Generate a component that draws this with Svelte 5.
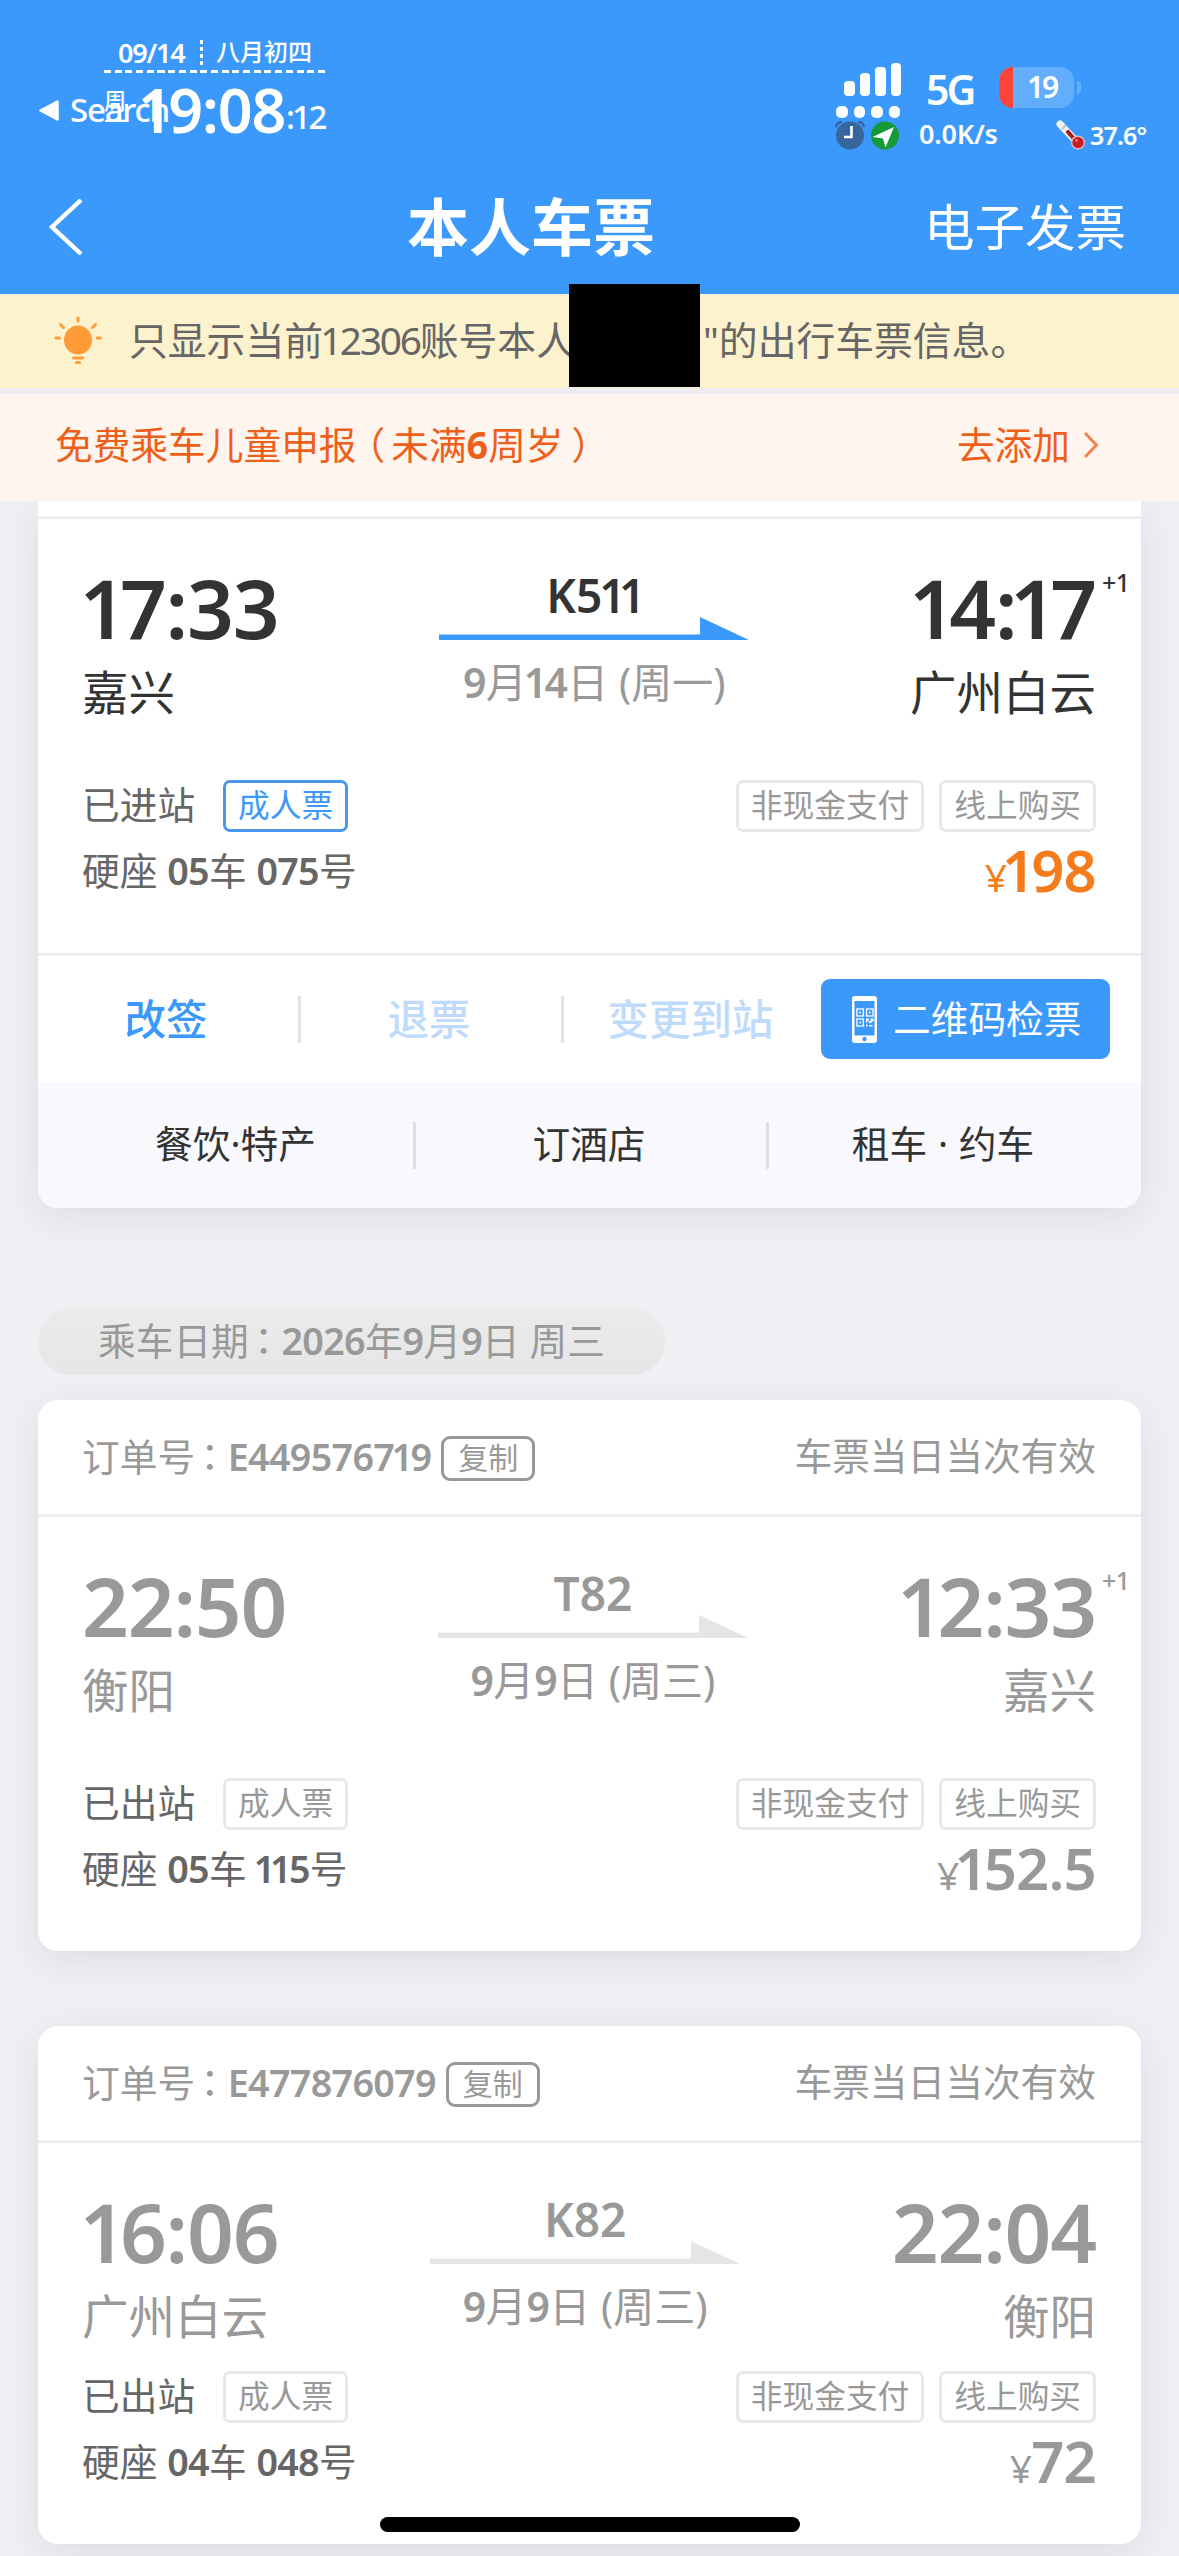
<script lang="ts">
	interface Ticket {
		order?: string;
		depart: string;
		arrive: string;
		nextDay?: boolean;
		from: string;
		to: string;
		train: string;
		date: string;
		status: string;
		seat: string;
		price: string;
		active?: boolean;
		compact?: boolean;
	}

	const current: Ticket = {
		depart: '17:33',
		arrive: '14:17',
		nextDay: true,
		from: '嘉兴',
		to: '广州白云',
		train: 'K511',
		date: '9月14日 (周一)',
		status: '已进站',
		seat: '硬座 05车 075号',
		price: '198',
		active: true
	};

	const history: Ticket[] = [
		{
			order: 'E449576719',
			depart: '22:50',
			arrive: '12:33',
			nextDay: true,
			from: '衡阳',
			to: '嘉兴',
			train: 'T82',
			date: '9月9日 (周三)',
			status: '已出站',
			seat: '硬座 05车 115号',
			price: '152.5'
		},
		{
			order: 'E477876079',
			depart: '16:06',
			arrive: '22:04',
			from: '广州白云',
			to: '衡阳',
			train: 'K82',
			date: '9月9日 (周三)',
			status: '已出站',
			seat: '硬座 04车 048号',
			price: '72',
			compact: true
		}
	];

	const bars = [15, 23, 29, 33];
</script>

<!-- the digit 1 is set tighter than the other digits -->
{#snippet digits(text: string)}{#each text.split(/(1)/) as part}{#if part === '1'}<span class="one">1</span>{:else}{part}{/if}{/each}{/snippet}

<!-- numbers stand out from the characters round them -->
{#snippet mixed(text: string)}{#each text.split(/(\d+)/) as part}{#if /\d/.test(part)}<b class="num">{@render digits(part)}</b>{:else}{part}{/if}{/each}{/snippet}

{#snippet ticketBody(t: Ticket)}
	<div class="ticket" class:active={t.active} class:compact={t.compact}>
		<div class="trip">
			<div class="stop">
				<div class="time">{@render digits(t.depart)}</div>
				<div class="station">{t.from}</div>
			</div>
			<div class="route">
				<div class="train">{@render digits(t.train)}</div>
				<svg class="arrow" width="310" height="23" viewBox="0 0 310 23">
					<path d="M0 17.5H261V0L310 23H0z" fill="currentColor" />
				</svg>
				<div class="date">{@render mixed(t.date)}</div>
			</div>
			<div class="stop end">
				<div class="time">{@render digits(t.arrive)}{#if t.nextDay}<span class="next-day">+1</span>{/if}</div>
				<div class="station">{t.to}</div>
			</div>
		</div>
		<div class="row tags">
			<span class="status">{t.status}</span>
			<span class="tag kind">成人票</span>
			<span class="tag push">非现金支付</span>
			<span class="tag">线上购买</span>
		</div>
		<div class="row fare">
			<span class="seat">{@render mixed(t.seat)}</span>
			<span class="price"><small>¥</small>{@render digits(t.price)}</span>
		</div>
	</div>
{/snippet}

<div class="screen">
	<header>
		<div class="status-bar">
			<div class="clock">
				<div class="calendar">
					<span>09/14</span>
					<i class="dots"></i>
					<span>八月初四</span>
				</div>
				<div class="now">
					<span class="weekday"><b>周</b><b>一</b></span>
					<i class="dots tall"></i>
					<span class="hm">{@render digits('19:08')}</span>
					<span class="sec">{@render digits(':12')}</span>
				</div>
				<div class="return">
					<svg width="20" height="21" viewBox="0 0 20 21"><path d="M1.5 10.5 18.5 1.5v18z" fill="#fff" stroke="#fff" stroke-width="2.5" stroke-linejoin="round" /></svg>
					<span>Search</span>
				</div>
			</div>

			<div class="system">
				<div class="signal">
					<div class="bars">
						{#each bars as h}<i style="height: {h}px"></i>{/each}
					</div>
					<div class="pips"><i></i><i></i><i></i><i></i></div>
					<div class="badges">
						<svg width="30" height="29" viewBox="0 0 30 29">
							<path d="M1 6Q2 1 7 1M29 6Q28 1 23 1" fill="none" stroke="#36669b" stroke-width="2.5" />
							<ellipse cx="15" cy="14.5" rx="14" ry="14" fill="#36669b" />
							<path d="M16.5 5v11H9" fill="none" stroke="#fff" stroke-width="2.6" />
						</svg>
						<svg width="28" height="29" viewBox="0 0 28 29">
							<ellipse cx="14" cy="14.5" rx="14" ry="14" fill="#149b37" />
							<path d="M23 6 1.5 16 12 17.5 14.5 26.5z" fill="#fff" />
						</svg>
					</div>
				</div>
				<div class="network">
					<span class="cell">5G</span>
					<span class="speed">0.0K/s</span>
				</div>
				<div class="power">
					<div class="battery">
						<div class="level">{@render digits('19')}</div>
						<i class="nub"></i>
					</div>
					<div class="heat">
						<svg width="30" height="30" viewBox="0 0 30 30">
							<path d="M4 4 17 18" stroke="#f4f0ee" stroke-width="7" stroke-linecap="round" />
							<path d="M6 9l4-4M10 13l4-4" stroke="#9fb9d8" stroke-width="1.3" />
							<path d="M12 12 20 21" stroke="#a51d22" stroke-width="4" stroke-linecap="round" />
							<circle cx="22" cy="22.5" r="7" fill="#e3b9bd" />
							<circle cx="22" cy="22.5" r="5.6" fill="#cb1c24" />
							<circle cx="20.5" cy="20.5" r="1.6" fill="#ee6b6b" />
						</svg>
						<span>37.6°</span>
					</div>
				</div>
			</div>
		</div>
		<nav>
			<svg class="back" width="34" height="56" viewBox="0 0 34 56"><path d="M32 1 3 28 32 55" fill="none" stroke="#fff" stroke-width="4.4" /></svg>
			<h1>本人车票</h1>
			<span class="invoice">电子发票</span>
		</nav>
	</header>

	<div class="notice">
		<svg width="48" height="48" viewBox="0 0 48 48" fill="#ff9c38" stroke="#ff9c38" stroke-width="3" stroke-linecap="round">
			<path d="M24 2v3M6.5 8.5 9.5 11.5M41.5 8.5 38.5 11.5M2 22h3.5M43 22h3.5" />
			<ellipse cx="24" cy="24" rx="12.5" ry="13" />
			<path d="M19.5 42h9M22.5 46.5h3" />
		</svg>
		<p>只显示当前<span class="account">{@render digits('12306')}</span>账号本人</p>
		<i class="mask"></i>
		<p>"的出行车票信息。</p>
	</div>

	<div class="child">
		<span>免费乘车儿童申报<span class="open">（</span>未满<b>6</b>周岁<span class="close">）</span></span>
		<span class="add">
			去添加
			<svg width="16" height="28" viewBox="0 0 16 28"><path d="M2 2 13.5 14 2 26" fill="none" stroke="#f28250" stroke-width="3" /></svg>
		</span>
	</div>

	<main>
		<section class="card first">
			<div class="cut"></div>
			{@render ticketBody(current)}
			<div class="actions">
				<span class="action">改签</span>
				<span class="action off">退票</span>
				<span class="action off">变更到站</span>
				<span class="qr">
					<svg width="25" height="47" viewBox="0 0 25 47">
						<rect width="25" height="47" rx="3" fill="#fff" />
						<rect x="2.5" y="5" width="20" height="34.5" fill="#3c99fc" />
						<circle cx="12.5" cy="43" r="2.2" fill="#3c99fc" />
						<g fill="none" stroke="#fff" stroke-width="1.3">
							<rect x="4.9" y="13" width="6.5" height="7" />
							<rect x="14.5" y="13" width="6.5" height="7" />
							<rect x="4.9" y="23" width="6.5" height="7" />
						</g>
						<path d="M7.4 15.5h1.5v2H7.4zM17 15.5h1.5v2H17zM7.4 25.5h1.5v2H7.4zM14 22.5h3v2h-1.5v2H14zM18.5 22.5h3v3h-2v1.5h-2.5v-2h1.5zM14 28.5h1.5v2H14zM17 29h3.5v1.5H17z" fill="#fff" />
					</svg>
					二维码检票
				</span>
			</div>
			<div class="extras">
				<span>餐饮·特产</span>
				<span>订酒店</span>
				<span>租车 · 约车</span>
			</div>
		</section>

		<div class="day">乘车日期<span class="colon">：</span>{@render mixed('2026年9月9日')} 周三</div>

		{#each history as t}
			<section class="card">
				<div class="order">
					<span>订单号<span class="colon">：</span><b class="num">{@render digits(t.order ?? '')}</b></span>
					<span class="copy">复制</span>
					<span class="valid">车票当日当次有效</span>
				</div>
				{@render ticketBody(t)}
			</section>
		{/each}
	</main>

	<div class="home"></div>
</div>

<style>
	:global(body) {
		background: #efeff4;
	}

	.screen {
		position: relative;
		width: 1179px;
		height: 2556px;
		overflow: hidden;
		background: #efeff4;
		color: #333;
		font-family: 'Noto Sans', 'Noto Sans CJK SC', sans-serif;
		font-size: 37.7px;
		line-height: 60px;
		white-space: nowrap;
	}

	svg {
		display: block;
		flex: none;
	}

	.one {
		letter-spacing: -0.07em;
		margin-left: -0.07em;
	}

	.num {
		font-weight: 600;
		letter-spacing: -0.7px;
	}

	.colon {
		font-family: 'Noto Sans CJK TC', sans-serif;
		margin: 0 -1px 0 -4px;
	}

	.open {
		margin: 0 6px 0 -9px;
	}

	.close {
		margin-left: 8px;
	}

	header {
		height: 294px;
		background: #3c99fc;
		color: #fff;
	}

	.status-bar {
		display: flex;
		justify-content: space-between;
		height: 166px;
		box-sizing: border-box;
		padding: 36px 32px 0 104px;
	}

	.clock {
		position: relative;
		width: 222px;
		font-weight: 500;
	}

	.calendar {
		display: flex;
		align-items: center;
		height: 34px;
		padding: 0 0 3px 14px;
		line-height: 30px;
		background: repeating-linear-gradient(90deg, #fff 0 7px, transparent 7px 10.7px) 0 100% / 100% 3px no-repeat;
	}

	.calendar span:first-child {
		width: 68px;
		font-size: 27px;
		font-weight: 600;
		letter-spacing: -1.2px;
	}

	.calendar span:last-child {
		margin-top: -2px;
		font-size: 24px;
		font-weight: 500;
	}

	.dots {
		width: 3px;
		height: 26px;
		margin: 0 13px 0 14px;
		background: repeating-linear-gradient(#fff 0 4px, transparent 4px 7px);
	}

	.now {
		display: flex;
		height: 64px;
		margin-top: 4px;
	}

	.weekday {
		display: flex;
		flex-direction: column;
		width: 22px;
		padding-top: 11px;
		font-size: 22px;
		line-height: 25px;
	}

	.weekday b {
		font-weight: 500;
	}

	.weekday b:last-child {
		line-height: 15px;
	}

	.dots.tall {
		height: 49px;
		margin: 9px 8px 0 8px;
	}

	.hm {
		width: 142px;
		font-size: 61px;
		font-weight: 600;
		line-height: 66px;
		letter-spacing: -1.2px;
	}

	.sec {
		padding-top: 19px;
		margin-left: 2px;
		font-size: 33px;
		line-height: 42px;
		letter-spacing: -0.8px;
	}

	/* the back-to-app link overlaps the clock */
	.return {
		position: absolute;
		left: -65px;
		top: 50px;
		display: flex;
		align-items: center;
		gap: 11px;
		font-size: 33px;
		line-height: 48px;
		letter-spacing: -1.2px;
	}

	.system {
		display: flex;
		padding-top: 27px;
	}

	.signal {
		width: 66px;
	}

	.bars {
		display: flex;
		align-items: flex-end;
		gap: 5px;
		padding-left: 9px;
	}

	.bars i {
		width: 11px;
		border-radius: 4px;
		background: #fff;
	}

	.pips {
		display: flex;
		gap: 6px;
		margin: 10px 0 3px 1px;
	}

	.pips i {
		width: 11.5px;
		height: 12px;
		border-radius: 5px;
		background: #fff;
	}

	.badges {
		display: flex;
		gap: 6px;
	}

	.network {
		display: flex;
		flex-direction: column;
		width: 80px;
		margin-left: 18px;
	}

	.cell {
		padding-left: 7px;
		font-size: 41px;
		font-weight: 600;
		line-height: 52px;
		letter-spacing: -3px;
	}

	.speed {
		margin-top: 3px;
		font-size: 27px;
		font-weight: 600;
		line-height: 32px;
		letter-spacing: -0.2px;
	}

	.power {
		width: 148px;
		padding-top: 4px;
	}

	.battery {
		display: flex;
		align-items: center;
		gap: 3px;
	}

	.level {
		width: 75px;
		height: 41px;
		box-sizing: border-box;
		padding-left: 30px;
		border-radius: 14px;
		background: linear-gradient(90deg, #ff453a 14px, #63adfd 14px);
		font-size: 30px;
		font-weight: 600;
		line-height: 40px;
		letter-spacing: -0.5px;
	}

	.nub {
		width: 4px;
		height: 13px;
		border-radius: 0 4px 4px 0;
		background: #63adfd;
	}

	.heat {
		display: flex;
		align-items: center;
		gap: 4px;
		margin: 12px 0 0 57px;
		font-size: 25px;
		font-weight: 600;
		line-height: 30px;
		letter-spacing: -0.8px;
	}

	nav {
		display: grid;
		grid-template-columns: 358px 250px 1fr;
		align-items: center;
		height: 122px;
		padding: 0 53px 0 49px;
	}

	h1 {
		margin: 0;
		font-size: 62px;
		line-height: 80px;
		font-weight: 700;
	}

	.invoice {
		justify-self: end;
		font-size: 50.5px;
	}

	.notice {
		display: flex;
		align-items: center;
		height: 94px;
		box-sizing: border-box;
		padding: 0 54px 2px;
		background: #fcf2cd;
		color: #666;
		font-size: 38.8px;
	}

	.notice p {
		margin: 0;
	}

	.notice p:nth-of-type(1) {
		width: 440px;
		margin-left: 27px;
	}

	.account {
		letter-spacing: -2.2px;
	}

	/* blacks out the passenger name, taller than the bar itself */
	.mask {
		position: relative;
		top: -5px;
		flex: none;
		width: 131px;
		height: 103px;
		margin-right: 3px;
		background: #000;
	}

	.child {
		display: flex;
		justify-content: space-between;
		align-items: center;
		height: 113px;
		box-sizing: border-box;
		padding: 0 80px 6px 55px;
		border-top: 6px solid #ececf1;
		background: #fff5ef;
		color: #ee5f1a;
	}

	.add {
		display: flex;
		align-items: center;
		gap: 13px;
	}

	main {
		height: 2055px;
		padding: 0 38px;
		overflow: hidden;
	}

	.card {
		width: 1103px;
		margin-bottom: 75px;
		border-radius: 20px;
		background: #fff;
		box-shadow: 0 10px 40px rgba(40, 40, 60, 0.09);
	}

	.first {
		margin-bottom: 100px;
		border-radius: 0 0 20px 20px;
	}

	.cut {
		height: 15px;
		border-bottom: 3px solid #eee;
	}

	.ticket {
		padding: 46px 45px 52px 44px;
		color: #999;
	}

	.trip {
		display: flex;
		justify-content: space-between;
		height: 158px;
	}

	.stop.end {
		text-align: right;
	}

	.time {
		position: relative;
		font-size: 82px;
		font-weight: 600;
		line-height: 84px;
		letter-spacing: -1.2px;
	}

	.time .one {
		letter-spacing: -0.08em;
		margin-left: -0.08em;
	}

	.time .one:first-child {
		margin-left: -0.03em;
	}

	.next-day {
		position: absolute;
		left: calc(100% + 6px);
		top: 2px;
		font-size: 25px;
		font-weight: 500;
		line-height: 30px;
		letter-spacing: -0.5px;
	}

	.station {
		margin-top: 13px;
		font-size: 46.5px;
	}

	.route {
		padding-top: 5px;
		text-align: center;
	}

	.train {
		font-size: 46px;
		font-weight: 600;
		line-height: 50px;
	}

	.arrow {
		margin: -3px 0 17px;
		color: #e5e5e5;
	}

	.date {
		font-size: 41px;
		line-height: 50px;
	}

	.row {
		display: flex;
		align-items: center;
	}

	.tags {
		height: 52px;
		margin-top: 57px;
	}

	.compact .tags {
		margin-top: 24px;
	}

	.status,
	.seat {
		color: #666;
	}

	.status {
		padding-bottom: 3px;
	}

	.tag {
		box-sizing: border-box;
		height: 52px;
		margin-left: 15px;
		padding: 0 12px;
		border: 3px solid #e8e8e8;
		border-radius: 7px;
		font-size: 31.7px;
		line-height: 44px;
	}

	.kind {
		margin-left: 28px;
	}

	.push {
		margin-left: auto;
	}

	.fare {
		justify-content: space-between;
		height: 60px;
		margin-top: 9px;
	}

	.price {
		padding-top: 4px;
		font-size: 58px;
		font-weight: 600;
		line-height: 56px;
		letter-spacing: -0.8px;
	}

	.price small {
		font-size: 39px;
		font-weight: 400;
	}

	.active,
	.active .train {
		color: #333;
	}

	.active .arrow {
		color: #3c99fc;
	}

	.active .date,
	.active .tag {
		color: #999;
	}

	.active .kind {
		border-color: #4a98ee;
		color: #3c99fc;
	}

	.active .price {
		color: #f57c1c;
	}

	.actions {
		display: grid;
		grid-template-columns: 263px 263px 257px 289px;
		align-items: center;
		height: 126px;
		box-sizing: content-box;
		border-top: 3px solid #eee;
	}

	.action {
		padding-right: 4px;
		color: #3c99fc;
		font-size: 41.5px;
		font-weight: 500;
		line-height: 47px;
		text-align: center;
	}

	.action:nth-child(-n + 2) {
		border-right: 3px solid #e3e3e5;
	}

	.action.off {
		color: #bfdbfb;
	}

	.qr {
		display: flex;
		align-items: center;
		gap: 16px;
		height: 80px;
		box-sizing: border-box;
		padding-left: 31px;
		border-radius: 9px;
		background: #3c99fc;
		color: #fff;
	}

	.extras {
		display: grid;
		grid-template-columns: 378px 353px 1fr;
		align-items: center;
		height: 126px;
		border-radius: 0 0 20px 20px;
		background: #f8f8fd;
		line-height: 43px;
		text-align: center;
	}

	.extras span {
		padding-bottom: 4px;
		border-right: 3px solid #dfdfe3;
	}

	.extras span:first-child {
		padding-left: 20px;
	}

	.extras span:nth-child(2) {
		padding-right: 4px;
	}

	.extras span:last-child {
		padding-right: 24px;
		border: none;
		word-spacing: 1px;
	}

	.day {
		width: 627px;
		height: 67px;
		box-sizing: border-box;
		margin-bottom: 25px;
		padding: 1px 59px 0 60px;
		border-radius: 33px;
		background: linear-gradient(#ebebeb, #e6e6e6);
		color: #999;
	}

	.order {
		display: flex;
		align-items: center;
		height: 114px;
		box-sizing: border-box;
		padding: 0 45px 2px 44px;
		color: #999;
	}

	.order + .ticket {
		border-top: 3px solid #eee;
	}

	.copy {
		box-sizing: border-box;
		height: 45px;
		margin: 4px 0 0 10px;
		padding: 0 14px;
		border: 3px solid #999;
		border-radius: 9px;
		font-size: 30px;
		line-height: 38px;
	}

	.valid {
		margin-left: auto;
	}

	.home {
		position: absolute;
		left: 380px;
		bottom: 24px;
		width: 420px;
		height: 15px;
		border-radius: 8px;
		background: #000;
	}
</style>
